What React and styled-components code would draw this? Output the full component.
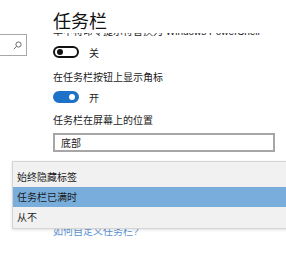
import React from 'react'
import styled, { createGlobalStyle } from 'styled-components'

const Global = createGlobalStyle`
  html, body { margin: 0; padding: 0; background: #fff; }
  body { overflow: hidden; font-family: "Noto Sans CJK SC", "Liberation Sans", sans-serif; color: #1a1a1a; }
`

const Page = styled.div`
  position: relative;
  display: flex;
  width: 286px;
  height: 256px;
  overflow: hidden;
  background: #fff;
`

const Nav = styled.div`
  width: 48px;
  flex-shrink: 0;
  padding-top: 34px;
  box-sizing: border-box;
`

const SearchBox = styled.div`
  margin-left: -4px;
  width: 31px;
  height: 22px;
  box-sizing: border-box;
  border: 1px solid #a8a8a8;
  display: flex;
  align-items: center;
  justify-content: flex-end;
  padding-right: 4px;
  color: #6a6a6a;
`

const Main = styled.div`
  flex: 1;
  display: flex;
  flex-direction: column;
  padding-left: 5px;
  min-width: 0;
`

const Header = styled.div`
  height: 33px;
  flex-shrink: 0;
  padding-top: 9px;
  box-sizing: border-box;
`

const Title = styled.h1`
  margin: 0;
  font-size: 18px;
  line-height: 22px;
  font-weight: 400;
  color: #111;
`

const Viewport = styled.div`
  flex: 1;
  overflow: hidden;
`

const Scroller = styled.div`
  margin-top: -8px;
  display: flex;
  flex-direction: column;
`

const Text = styled.div`
  font-size: 10px;
  line-height: 14px;
  white-space: nowrap;
  margin-top: ${p => p.$top || 0}px;
  color: ${p => p.$link ? '#5a90d2' : '#1a1a1a'};
  font-family: "Liberation Sans", "Noto Sans CJK SC", sans-serif;
`

const ToggleRow = styled.div`
  display: flex;
  align-items: center;
  gap: 10px;
  margin-top: ${p => p.$top}px;
  height: 12px;
  font-size: 10px;
`

const Track = styled.div`
  width: 26px;
  height: 12px;
  box-sizing: border-box;
  border-radius: 6px;
  border: 2px solid ${p => p.$on ? '#1d72c7' : '#111'};
  background: ${p => p.$on ? '#1d72c7' : '#fff'};
  display: flex;
  align-items: center;
  justify-content: ${p => p.$on ? 'flex-end' : 'flex-start'};
  padding: 0 2px;
`

const Knob = styled.div`
  width: 6px;
  height: 6px;
  border-radius: 50%;
  background: ${p => p.$on ? '#fff' : '#111'};
`

const Select = styled.div`
  margin-top: ${p => p.$top}px;
  width: 222px;
  height: 19px;
  box-sizing: border-box;
  border: 2px solid #a6a6a6;
  font-size: 10px;
  line-height: 15px;
  padding-left: 6px;
`

const Menu = styled.div`
  position: absolute;
  left: 12px;
  top: 161px;
  right: -10px;
  height: 68px;
  box-sizing: border-box;
  background: #f1f1f1;
  border: 1px solid #d4d4d4;
  padding-top: 5px;
  box-shadow: 0 1px 3px rgba(0,0,0,0.12);
`

const Option = styled.div`
  height: 20px;
  line-height: 20px;
  font-size: 10px;
  padding-left: 4px;
  background: ${p => p.$selected ? '#79aedc' : 'transparent'};
  color: #1a1a1a;
`

const SearchIcon = () => (
  <svg width="9" height="9" viewBox="0 0 9 9" fill="none" stroke="currentColor" strokeWidth="1">
    <circle cx="5.5" cy="3.5" r="2.6" />
    <path d="M3.6 5.4 L0.8 8.2" />
  </svg>
)

const Toggle = ({ on }) => (
  <Track $on={on}><Knob $on={on} /></Track>
)

export default function App() {
  return (
    <Page>
      <Global />
      <Nav>
        <SearchBox><SearchIcon /></SearchBox>
      </Nav>
      <Main>
        <Header><Title>任务栏</Title></Header>
        <Viewport>
          <Scroller>
            <Text>单中将命令提示符替换为 Windows PowerShell</Text>
            <ToggleRow $top={7}><Toggle on={false} /><span>关</span></ToggleRow>
            <Text $top={13}>在任务栏按钮上显示角标</Text>
            <ToggleRow $top={6}><Toggle on /><span>开</span></ToggleRow>
            <Text $top={11}>任务栏在屏幕上的位置</Text>
            <Select $top={5}>底部</Select>
            <Text $top={73} $link>如何自定义任务栏?</Text>
          </Scroller>
        </Viewport>
      </Main>
      <Menu>
        <Option>始终隐藏标签</Option>
        <Option $selected>任务栏已满时</Option>
        <Option>从不</Option>
      </Menu>
    </Page>
  )
}
